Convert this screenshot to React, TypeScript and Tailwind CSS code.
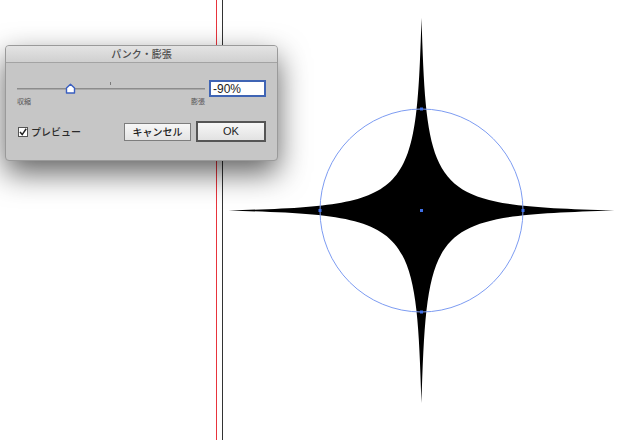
import React from "react";

const jp = { fontFamily: '"Noto Sans CJK JP", "Liberation Sans", sans-serif' };

function Star() {
   // pucker -90% of a circle r=101.5, centred at (421,210)
   const t = 192.85;
   const a = 5.6;
   const b = 10.15;
   const d = `M0,${-t} C${a},${-b} ${b},${-a} ${t},0 C${b},${a} ${a},${b} 0,${t} C${-a},${b} ${-b},${a} ${-t},0 C${-b},${-a} ${-a},${-b} 0,${-t} Z`;
   const pts = [
      [0, -101.5],
      [101.5, 0],
      [0, 101.5],
      [-101.5, 0],
      [0, 0],
   ];
   return (
      <svg
         className="absolute left-0 top-0"
         width={640}
         height={440}
         viewBox="0 0 640 440"
      >
         <g transform="translate(421.5 210.5)">
            <path d={d} fill="#000" />
            <circle r={101.5} fill="none" stroke="#7d9cf2" strokeWidth={1} />
            {pts.map(([x, y], i) => (
               <rect
                  key={i}
                  x={x - 1.5}
                  y={y - 1.5}
                  width={3}
                  height={3}
                  fill="#3f6fe6"
               />
            ))}
         </g>
      </svg>
   );
}

function Dialog() {
   return (
      <div
         className="absolute left-[5px] top-[45px] w-[273px] h-[116px] rounded-[4px] border border-[#9a9a9a] bg-[#c6c6c6] shadow-[0_12px_30px_rgba(0,0,0,0.62)] overflow-hidden"
         style={jp}
      >
         <div className="h-[17px] flex items-center justify-center border-b border-[#a3a3a3] bg-gradient-to-b from-[#e4e4e4] to-[#d0d0d0] text-[10px] font-medium text-[#4d4d4d] leading-none">
            パンク・膨張
         </div>
         <div className="pl-[11px] pr-[11px] pt-[17px]">
            <div className="flex items-center gap-[4px]">
               <div className="relative w-[188px] h-[16px]">
                  <div className="absolute left-0 right-0 top-[7px] h-[2px] bg-[#8c8c8c] border-b border-[#a9a9a9]" />
                  <div className="absolute left-[93px] top-[1px] w-px h-[3px] bg-[#7a7a7a]" />
                  <svg
                     className="absolute left-[48px] top-[2px]"
                     width={11}
                     height={11}
                     viewBox="0 0 11 11"
                  >
                     <path
                        d="M1.5 10 L1.5 5 L5.5 1.2 L9.5 5 L9.5 10 Z"
                        fill="#fff"
                        stroke="#3a5fc0"
                        strokeWidth={1.4}
                        strokeLinejoin="round"
                     />
                  </svg>
               </div>
               <div
                  className="w-[57px] h-[17px] bg-white border-2 border-[#3f64b4] flex items-center pl-[2px] text-[12px] text-[#222] leading-none"
                  style={{ fontFamily: '"Liberation Sans", sans-serif' }}
               >
                  -90%
               </div>
            </div>
            <div className="w-[188px] flex justify-between text-[7px] text-[#555] leading-none mt-[1px]">
               <span>収縮</span>
               <span>膨張</span>
            </div>
            <div className="flex items-center mt-[16px]">
               <div className="flex items-center gap-[3px] pl-[1px]">
                  <div className="w-[10px] h-[10px] bg-white border border-[#555] flex items-center justify-center">
                     <svg width={8} height={8} viewBox="0 0 8 8">
                        <path
                           d="M1 4 L3.2 6.6 L7.2 0.8"
                           fill="none"
                           stroke="#222"
                           strokeWidth={1.5}
                        />
                     </svg>
                  </div>
                  <span className="text-[10px] font-medium text-[#2a2a2a] leading-none">
                     プレビュー
                  </span>
               </div>
               <div className="ml-auto flex items-center gap-[5px]">
                  <div className="w-[67px] h-[18px] bg-gradient-to-b from-[#f7f7f7] to-[#e4e4e4] border border-[#7d7d7d] flex items-center justify-center text-[10px] font-medium text-[#222] leading-none">
                     キャンセル
                  </div>
                  <div
                     className="w-[70px] h-[21px] bg-gradient-to-b from-[#f7f7f7] to-[#e2e2e2] border-2 border-[#555] flex items-center justify-center text-[11px] text-[#222] leading-none"
                     style={{ fontFamily: '"Liberation Sans", sans-serif' }}
                  >
                     OK
                  </div>
               </div>
            </div>
         </div>
      </div>
   );
}

export default function App() {
   return (
      <div className="relative w-[640px] h-[440px] bg-white overflow-hidden">
         <div className="absolute left-[216px] top-0 w-px h-full bg-[#e8343c]" />
         <div className="absolute left-[222px] top-0 w-px h-full bg-[#333]" />
         <Star />
         <Dialog />
      </div>
   );
}
